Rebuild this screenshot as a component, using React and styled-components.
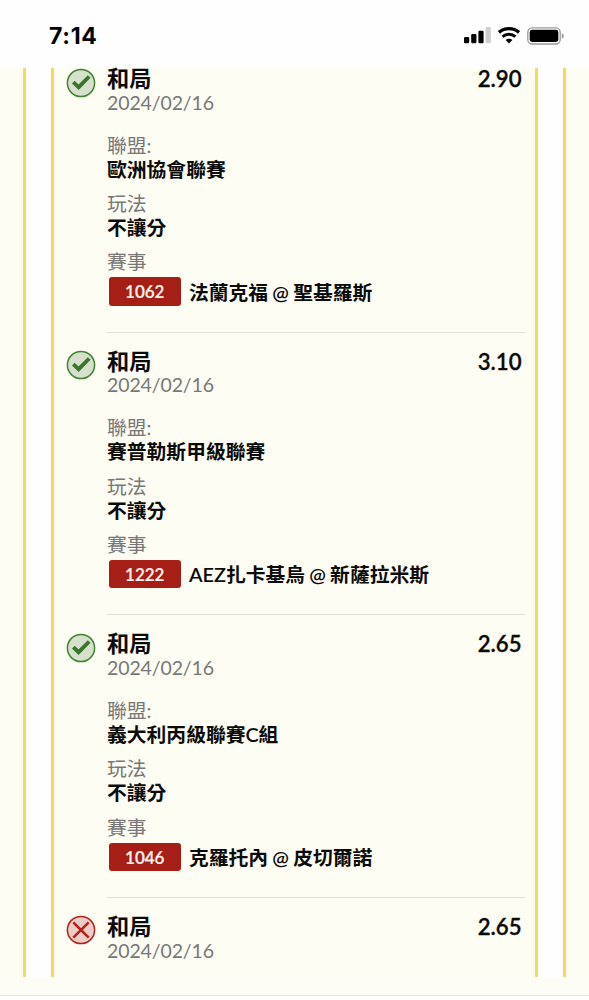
import React from 'react';
import styled, { createGlobalStyle } from 'styled-components';

const legs = [
    { id: 1, won: true, pick: '和局', date: '2024/02/16', odds: '2.90', league: '歐洲協會聯賽', play: '不讓分', code: '1062', match: '法蘭克福 @ 聖基羅斯' },
    { id: 2, won: true, pick: '和局', date: '2024/02/16', odds: '3.10', league: '賽普勒斯甲級聯賽', play: '不讓分', code: '1222', match: 'AEZ扎卡基烏 @ 新薩拉米斯' },
    { id: 3, won: true, pick: '和局', date: '2024/02/16', odds: '2.65', league: '義大利丙級聯賽C組', play: '不讓分', code: '1046', match: '克羅托內 @ 皮切爾諾' },
    { id: 4, won: false, pick: '和局', date: '2024/02/16', odds: '2.65' },
]

const StatusIcons = () => (
    <Icons>
        <svg width="27" height="17" viewBox="0 0 27 17">
            <rect x="0" y="10" width="5.2" height="6.2" rx="1.2" fill="#000" />
            <rect x="7.2" y="7" width="5.2" height="9.2" rx="1.2" fill="#000" />
            <rect x="14.4" y="3.8" width="5.2" height="12.4" rx="1.2" fill="#000" />
            <rect x="21.6" y="0" width="5.2" height="16.2" rx="1.2" fill="#cfcfcf" />
        </svg>
        <svg width="22" height="17" viewBox="0 0 22 17">
            <path d="M1 5.4C6.6 .4 15.4 .4 21 5.4" fill="none" stroke="#000" strokeWidth="3.3" />
            <path d="M4.6 9.6c3.7-3.2 9.1-3.2 12.8 0" fill="none" stroke="#000" strokeWidth="3.1" />
            <path d="M7.6 13c1.9-1.7 4.9-1.7 6.8 0L11 16.5z" fill="#000" />
        </svg>
        <svg width="38" height="18" viewBox="0 0 38 18">
            <rect x=".8" y=".8" width="32.4" height="16.2" rx="4.5" fill="none" stroke="#999" strokeWidth="1.3" />
            <rect x="2.7" y="2.8" width="28.6" height="12.2" rx="2.4" fill="#000" />
            <path d="M34.8 6.2c2.6 1 2.6 4.6 0 5.6z" fill="#999" />
        </svg>
    </Icons>
)

const ResultIcon = ({ won }) => (
    <ResultSvg viewBox="0 0 30 30">
        <circle cx="15" cy="15" r="13.6" fill={won ? '#d6e0cc' : '#efcdc7'} stroke={won ? '#3f8432' : '#b3221a'} strokeWidth="1.5" />
        {won
            ? <path d="M7.3 14.2l5.3 5L23.2 8.5" fill="none" stroke="#39752a" strokeWidth="3.9" />
            : <path d="M7.3 7.3l15.4 15.4M22.7 7.3l-15.4 15.4" fill="none" stroke="#b3221a" strokeWidth="2.6" />}
    </ResultSvg>
)

const BetLeg = ({ leg }) => (
    <Leg>
        <ResultIcon won={leg.won} />
        <LegBody>
            <LegHead>
                <span>{leg.pick}</span>
                <Odds>{leg.odds}</Odds>
            </LegHead>
            <LegDate>{leg.date}</LegDate>
            {leg.match && (
                <Details>
                    <Field>
                        <Label>聯盟:</Label>
                        <Value>{leg.league}</Value>
                    </Field>
                    <Field>
                        <Label>玩法</Label>
                        <Value>{leg.play}</Value>
                    </Field>
                    <Field>
                        <Label>賽事</Label>
                        <MatchRow>
                            <Code>{leg.code}</Code>
                            <Value>{leg.match}</Value>
                        </MatchRow>
                    </Field>
                </Details>
            )}
        </LegBody>
    </Leg>
)

export default function App() {
    return (
        <Page>
            <GlobalStyle />
            <StatusBar>
                <Clock>7:14</Clock>
                <StatusIcons />
            </StatusBar>
            <Content>
                <Outer $side="left" />
                <Ticket>
                    {legs.map((leg) => <BetLeg key={leg.id} leg={leg} />)}
                </Ticket>
                <Outer $side="right" />
            </Content>
            <Footer />
        </Page>
    )
}

const GlobalStyle = createGlobalStyle`
    * {
        box-sizing: border-box;
    }
    body {
        margin: 0;
        background: #fefefe;
    }
`

const Page = styled.div`
    display: flex;
    flex-direction: column;
    width: 589px;
    height: 1000px;
    background: #fefefe;
    color: #0b0b0b;
    font-family: Lato, 'Noto Sans CJK TC', sans-serif;
`

const StatusBar = styled.div`
    display: flex;
    flex: none;
    justify-content: space-between;
    height: 68px;
    padding: 0 24px 0 49px;
`

const Clock = styled.div`
    margin-top: 22px;
    font-family: Inter, sans-serif;
    font-size: 23px;
    font-weight: 700;
    letter-spacing: 0.7px;
    line-height: 29px;
    color: #000;
`

const Icons = styled.div`
    display: flex;
    align-items: flex-start;
    gap: 7px;
    padding-top: 26.5px;
`

const Content = styled.div`
    display: flex;
    flex: none;
    justify-content: space-between;
    height: 909px;
`

const Outer = styled.div`
    width: 26px;
    background: #fdfdf3;
    border: 0 solid #f8d858;
    border-${(p) => (p.$side === 'left' ? 'right' : 'left')}-width: 3px;
`

const Ticket = styled.div`
    width: 487px;
    padding: 0 10px 0 12px;
    background: #fdfdf3;
    border: solid #f8d858;
    border-width: 0 3px;
`

const ResultSvg = styled.svg`
    flex: none;
    width: 30px;
    height: 30px;
    margin-top: 17.5px;
`

const LegBody = styled.div`
    flex: 1;
    height: 282.7px;
    padding-top: 18px;
    border-bottom: 1.5px solid #dfe0d9;
`

const Leg = styled.div`
    display: flex;
    align-items: flex-start;
    gap: 11px;

    /* list is scrolled, so the first leg starts right at its title */
    &:first-child ${LegBody} {
        height: 264.6px;
        padding-top: 0;
    }
    &:first-child ${ResultSvg} {
        margin-top: -0.5px;
    }
    &:last-child ${LegBody} {
        height: auto;
        border-bottom: none;
    }
`

const LegHead = styled.div`
    display: flex;
    justify-content: space-between;
    padding-right: 3.5px;
    font-size: 22.2px;
    font-weight: 600;
    line-height: 22px;
`

const Odds = styled.span`
    -webkit-text-stroke: 0.3px currentColor;
`

const LegDate = styled.div`
    font-size: 19.5px;
    letter-spacing: -0.12px;
    line-height: 22px;
    margin-top: 1.8px;
    color: #777;
`

const Details = styled.div`
    display: flex;
    flex-direction: column;
    gap: 10.3px;
    margin-top: 19px;
`

const Field = styled.div`
    font-size: 19.8px;
    line-height: 24px;
`

const Label = styled.div`
    color: #777;
`

const Value = styled.div`
    font-weight: 600;
    word-spacing: -0.7px;
    white-space: nowrap;
`

const MatchRow = styled.div`
    display: flex;
    align-items: center;
    gap: 8.5px;
    padding: 4px 0 0 2px;
`

const Code = styled.div`
    width: 71.5px;
    height: 28.5px;
    border-radius: 3px;
    background: #a61f16;
    color: #fdf3ee;
    font-size: 17px;
    font-weight: 600;
    line-height: 29px;
    text-align: center;
    -webkit-text-stroke: 0.2px currentColor;
`

const Footer = styled.div`
    flex: none;
    height: 19px;
    background: #fdfdf5;
    border-bottom: 1px solid #e2e2e2;
`
